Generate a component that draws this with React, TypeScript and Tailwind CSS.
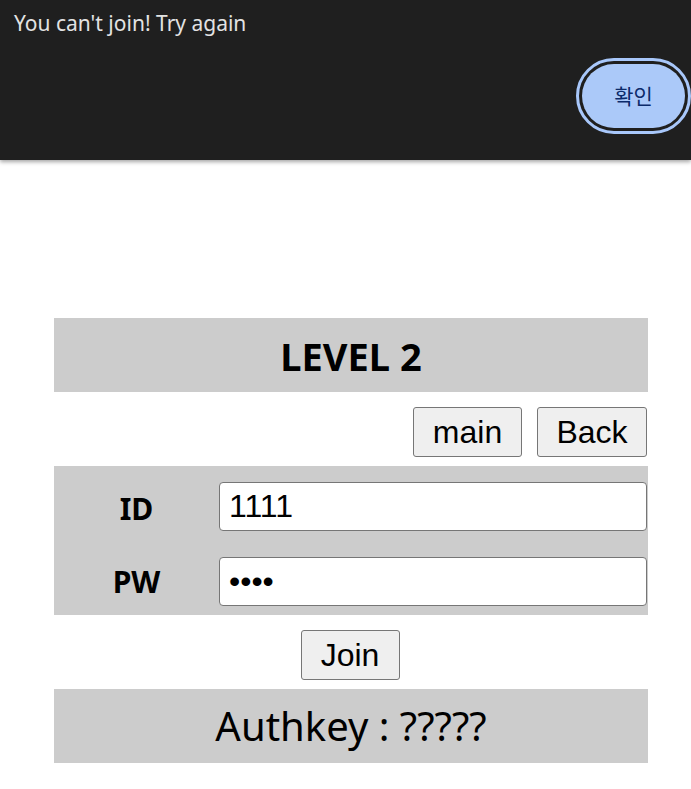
export default function App() {
  return (
    <div className="relative min-h-[789px] bg-white">
      {/* alert dialog */}
      <div className="absolute left-0 top-0 z-10 h-[160px] w-full bg-[#1f1f1f] shadow-[0_2px_4px_rgba(0,0,0,0.35)]">
        <p className="pl-[14px] pt-[9px] text-[21px] leading-[28px] text-[#e3e3e3] [font-family:'Noto_Sans',sans-serif]">
          You can't join! Try again
        </p>
        <div className="flex justify-end pt-[21px]">
          <button className="h-[76px] w-[115px] rounded-full border-[3px] border-[#a8c7fa] bg-[#1f1f1f] p-[3px]">
            <span className="flex h-full w-full items-center justify-center rounded-full bg-[#abc9f9] text-[21px] text-[#0b2a6a] [font-family:'Noto_Sans_CJK_KR',sans-serif]">
              확인
            </span>
          </button>
        </div>
      </div>

      <div className="pt-[318px]">
        <div className="ml-[54px] w-[594px]">
          <div className="flex h-[74px] items-center justify-center bg-[#cccccc]">
            <h1 className="pt-[2px] text-[38px] font-bold text-black [font-family:'Noto_Sans',sans-serif]">
              LEVEL 2
            </h1>
          </div>

          <div className="flex justify-end gap-[15px] pr-[1px] pt-[15px] pb-[9px]">
            <button className="h-[50px] w-[109px] rounded-[3px] border border-[#767676] bg-[#efefef] text-[32px] text-black [font-family:'Liberation_Sans',Arial,sans-serif]">
              main
            </button>
            <button className="h-[50px] w-[110px] rounded-[3px] border border-[#767676] bg-[#efefef] text-[32px] text-black [font-family:'Liberation_Sans',Arial,sans-serif]">
              Back
            </button>
          </div>

          <div className="flex flex-col gap-[26px] bg-[#cccccc] pt-[15px] pb-[9px] pr-[1px]">
            <div className="flex items-center">
              <label className="w-[165px] shrink-0 pt-[5px] text-center text-[30px] font-bold text-black [font-family:'Noto_Sans',sans-serif]">
                ID
              </label>
              <input
                readOnly
                value="1111"
                className="h-[49px] min-w-0 flex-1 rounded-[4px] border border-[#767676] bg-white px-[9px] text-[32px] text-black [font-family:'Liberation_Sans',Arial,sans-serif] outline-none"
              />
            </div>
            <div className="flex items-center">
              <label className="w-[165px] shrink-0 text-center text-[30px] font-bold text-black [font-family:'Noto_Sans',sans-serif]">
                PW
              </label>
              <input
                readOnly
                type="password"
                value="1111"
                className="h-[49px] min-w-0 flex-1 rounded-[4px] border border-[#767676] bg-white px-[9px] text-[32px] text-black [font-family:'Liberation_Sans',Arial,sans-serif] outline-none"
              />
            </div>
          </div>

          <div className="flex justify-center pt-[15px] pb-[9px] pr-[2px]">
            <button className="h-[50px] w-[99px] rounded-[3px] border border-[#767676] bg-[#efefef] text-[32px] text-black [font-family:'Liberation_Sans',Arial,sans-serif]">
              Join
            </button>
          </div>

          <div className="flex h-[74px] items-center justify-center bg-[#cccccc]">
            <p className="text-[40px] text-black [font-family:'Noto_Sans',sans-serif]">Authkey : ?????</p>
          </div>
        </div>
      </div>
    </div>
  );
}
